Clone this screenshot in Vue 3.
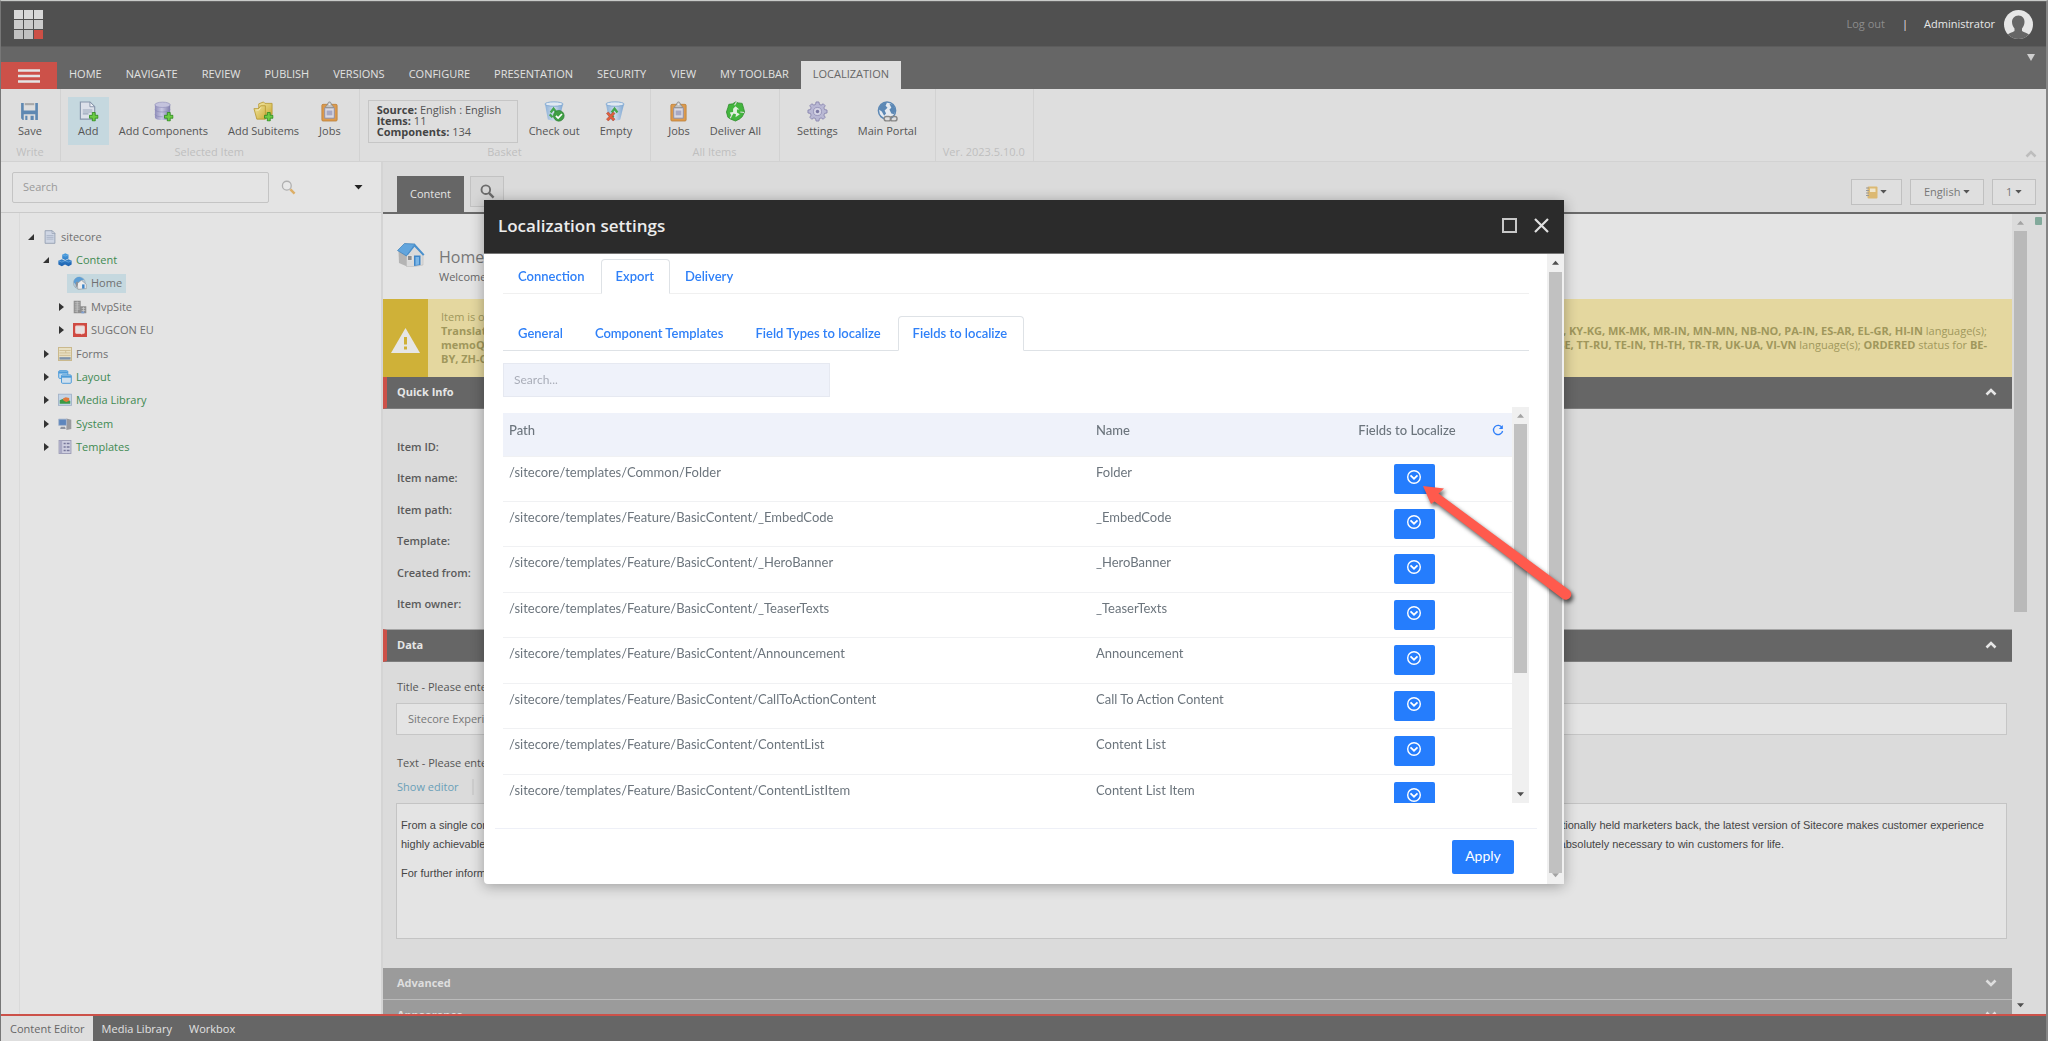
<script setup>
import { ref } from 'vue'

const ribbonTabs = ['Home', 'Navigate', 'Review', 'Publish', 'Versions', 'Configure', 'Presentation', 'Security', 'View', 'My Toolbar', 'Localization']
const activeTab = ref('Localization')

const tree = [
  { label: 'sitecore', level: 0, icon: 'doc', state: 'open' },
  { label: 'Content', level: 1, icon: 'cubes', state: 'open', green: true },
  { label: 'Home', level: 2, icon: 'globeHouse', state: 'leaf', selected: true },
  { label: 'MvpSite', level: 2, icon: 'buildings', state: 'closed' },
  { label: 'SUGCON EU', level: 2, icon: 'board', state: 'closed' },
  { label: 'Forms', level: 1, icon: 'forms', state: 'closed' },
  { label: 'Layout', level: 1, icon: 'windows', state: 'closed', green: true },
  { label: 'Media Library', level: 1, icon: 'picture', state: 'closed', green: true },
  { label: 'System', level: 1, icon: 'computer', state: 'closed', green: true },
  { label: 'Templates', level: 1, icon: 'template', state: 'closed', green: true },
]

const itemFields = ['Item ID:', 'Item name:', 'Item path:', 'Template:', 'Created from:', 'Item owner:']

const base = '/sitecore/templates/Feature/BasicContent/'
const rows = [
  { path: '/sitecore/templates/Common/Folder', name: 'Folder' },
  { path: base + '_EmbedCode', name: '_EmbedCode' },
  { path: base + '_HeroBanner', name: '_HeroBanner' },
  { path: base + '_TeaserTexts', name: '_TeaserTexts' },
  { path: base + 'Announcement', name: 'Announcement' },
  { path: base + 'CallToActionContent', name: 'Call To Action Content' },
  { path: base + 'ContentList', name: 'Content List' },
  { path: base + 'ContentListItem', name: 'Content List Item' },
]

const settingsTabs = ['Connection', 'Export', 'Delivery']
const exportTabs = ['General', 'Component Templates', 'Field Types to localize', 'Fields to localize']
const settingsTab = ref('Export')
const exportTab = ref('Fields to localize')
const treeSearch = ref('')
const fieldSearch = ref('')
const itemTitle = ref('Sitecore Experience Platform')
</script>

<template>
  <div class="app">
    <svg class="sprite" aria-hidden="true">
      <defs>
        <linearGradient id="gBlue" x1="0" y1="0" x2="0" y2="1"><stop offset="0" stop-color="#4a9fe0" /><stop offset="1" stop-color="#1b5fae" /></linearGradient>
        <linearGradient id="gGold" x1="0" y1="0" x2="1" y2="1"><stop offset="0" stop-color="#f1e6a0" /><stop offset="1" stop-color="#cdae3c" /></linearGradient>
        <linearGradient id="gLilac" x1="0" y1="0" x2="1" y2="0"><stop offset="0" stop-color="#8f8dba" /><stop offset=".45" stop-color="#c9c8e2" /><stop offset="1" stop-color="#807eac" /></linearGradient>
        <linearGradient id="gBin" x1="0" y1="0" x2="1" y2="0"><stop offset="0" stop-color="#8ab0d8" /><stop offset=".5" stop-color="#cfdcea" /><stop offset="1" stop-color="#7ba5d2" /></linearGradient>
      </defs>
      <symbol id="plus" viewBox="0 0 10 10"><path d="M3.500 .5h3v3h3v3h-3v3h-3v-3h-3v-3h3z" fill="#6ccb45" stroke="#2f8a22" stroke-width=".9" /></symbol>
      <symbol id="save" viewBox="0 0 20 20"><path d="M2 2h2.500v7h11V2H18v16h-2.500v-5.500h-11V18H3.500L2 16.500z" fill="#5e88b2" /><path d="M5.500 2h9v2h-9z" fill="#a9a9a9" /><path d="M6 14h2v4H6zM11 14h3v4h-3z" fill="#5e88b2" /></symbol>
      <symbol id="doc" viewBox="0 0 20 20"><path d="M3 1h10l4 4v14H3z" fill="#cfd6e4" stroke="#8e9aae" stroke-width="1.200" /><path d="M13 1v4h4z" fill="#f0f2f6" stroke="#8e9aae" stroke-width="1" /><path d="M5 8h10M5 10.500h10M5 13h10" stroke="#a3adc0" stroke-width="1.100" /></symbol>
      <symbol id="docAdd" viewBox="0 0 22 22"><path d="M2.500 1h10l5 5v13h-15z" fill="#dde1ea" stroke="#8795ab" stroke-width="1.200" /><path d="M12.500 1v5h5z" fill="#f0f2f6" stroke="#8795ab" stroke-width="1" /><path d="M5 9.500h10M5 11.500h10M5 13.500h6" stroke="#9ba7bb" stroke-width="1.100" /><use href="#plus" x="11.500" y="11.500" width="10" height="10" /></symbol>
      <symbol id="dbAdd" viewBox="0 0 22 22"><path d="M2 4v13c0 2 3.500 3 8 3s8-1 8-3V4z" fill="url(#gLilac)" /><ellipse cx="10" cy="4" rx="8" ry="2.800" fill="#c4c3dd" stroke="#9290bb" stroke-width=".7" /><path d="M2 9c1 2 4 2.500 8 2.500S17 11 18 9M2 14c1 2 4 2.500 8 2.500" fill="none" stroke="#8785b4" stroke-width=".6" /><use href="#plus" x="11.500" y="11.500" width="10" height="10" /></symbol>
      <symbol id="folderAdd" viewBox="0 0 22 22"><path d="M6 3l5-2 1.500 1.500H20V14H6z" fill="url(#gGold)" stroke="#b99a35" stroke-width=".9" /><path d="M1 8h5l2-3h5v14H4z" fill="url(#gGold)" stroke="#b99a35" stroke-width=".9" /><path d="M3.500 9.500H6L8 7" fill="none" stroke="#f7f0c8" stroke-width="1" /><use href="#plus" x="11.500" y="11.500" width="10" height="10" /></symbol>
      <symbol id="clip" viewBox="0 0 22 22"><rect x="3" y="3.500" width="16" height="17.500" rx="1.200" fill="#dc9a4c" stroke="#b97e3a" stroke-width=".8" /><path d="M6 7h10v11H6z" fill="#d9d9e3" stroke="#8d8fa8" stroke-width="1" /><path d="M8 10h6v5H8z" fill="#a7a8c4" /><path d="M7 7c0-2 1-2.500 2-3 0-2 1-3 2-3s2 1 2 3c1 .500 2 1 2 3z" fill="#c4c4c4" stroke="#8a8a8a" stroke-width=".9" /><circle cx="11" cy="3.500" r="1" fill="#eee" /></symbol>
      <symbol id="bin" viewBox="0 0 22 22"><path d="M1 3l3 16.500c4 1.500 9 1.500 12 0L20 3z" fill="url(#gBin)" /><ellipse cx="10.500" cy="3.200" rx="9.500" ry="2.300" fill="#e1e9f2" stroke="#7ca5d0" stroke-width=".9" /><path d="M7 12l3-4 3 4M6 14l3 3" fill="none" stroke="#43a64c" stroke-width="2.400" /></symbol>
      <symbol id="binCheck" viewBox="0 0 22 22"><use href="#bin" width="22" height="22" /><circle cx="15.500" cy="15.500" r="5.600" fill="#3f9f43" stroke="#2a7b30" stroke-width=".7" /><path d="M12.500 15.500l2.300 2.400 4-4.300" fill="none" stroke="#fff" stroke-width="1.800" /></symbol>
      <symbol id="binX" viewBox="0 0 22 22"><use href="#bin" width="22" height="22" /><path d="M1.500 13l2-1.500 2.500 2.800 2.500-2.800 2 1.500-2.800 3.200L10.500 19l-2 2L6 18l-2.500 3-2-2 2.800-2.800z" fill="#e0603f" stroke="#a93c26" stroke-width=".5" /></symbol>
      <symbol id="recycle" viewBox="0 0 22 22"><path d="M11 1l3 1 4 .500 1.500 5 1 4-2.500 5-3 2.500-4 2-5-2-3-2-1.500-5.500L3 7l1-3.500 4-.500z" fill="#43b53e" stroke="#2d8a2a" stroke-width=".8" /><path d="M11 5.500l4 3.500h-2.500v3l3 2-4.500 3 .500-3-2.500-1-2 3-2-4 3.500-.500V8z" fill="#e2efe0" /><path d="M12 1l-2 3.500M20 12l-4-.5M5.500 18L7 15" stroke="#dcdcdc" stroke-width="1.200" /></symbol>
      <symbol id="gear" viewBox="0 0 22 22"><path d="M9.500 1h3l.5 2.600 1.800.7L17 2.900 19.100 5l-1.400 2.200.7 1.800 2.600.5v3l-2.600.5-.7 1.800 1.400 2.200-2.100 2.100-2.200-1.400-1.800.7-.5 2.600h-3L9 18.400l-1.800-.7L5 19.100 2.900 17l1.400-2.200-.7-1.800L1 12.500v-3L3.600 9l.7-1.800L2.900 5 5 2.900l2.200 1.400L9 3.600z" fill="#b9b8d4" stroke="#8683ad" stroke-width=".9" /><circle cx="11" cy="11" r="4.200" fill="#d4d3e4" stroke="#8683ad" stroke-width=".7" /><circle cx="11" cy="11" r="1.800" fill="#7a77a2" /></symbol>
      <symbol id="globe" viewBox="0 0 22 22"><circle cx="10.500" cy="10" r="9" fill="#e5eaf0" stroke="#5c88b5" stroke-width="1.600" /><path d="M2.500 6C4 3 7 1.500 10.500 1.500L9 5l2 2-3 3 1.500 3-2 2.500L5 11 2 9zM13 3l4 1 2.500 5-1.500 5-3-1-2-4 2-2z" fill="#5c88b5" /><rect x="7.500" y="16.200" width="7" height="4.600" rx="2.300" fill="#dedede" stroke="#888" stroke-width="1.500" /><rect x="14" y="16.200" width="7" height="4.600" rx="2.300" fill="none" stroke="#888" stroke-width="1.500" /></symbol>
      <symbol id="glass" viewBox="0 0 16 16"><circle cx="6.200" cy="6" r="4.600" fill="none" stroke="currentColor" stroke-width="2" /><path d="M9.500 9.500l5 5" stroke="currentColor" stroke-width="2.600" /></symbol>
      <symbol id="glassGold" viewBox="0 0 16 16"><circle cx="6.200" cy="6" r="4.700" fill="#e8e8e8" stroke="#b0b0b0" stroke-width="1.400" /><path d="M10 10l4.500 4.500" stroke="#dcae66" stroke-width="2.600" /></symbol>
      <symbol id="cubes" viewBox="0 0 20 20"><path d="M6 2.500L10.500.500 15 2.500v5.500L10.500 10 6 8zM.5 11L5.500 9l4.500 2v5.500L5.500 19l-5-2.500zM10 11l5-2 4.500 2v5.500L15 19l-5-2.500z" fill="url(#gBlue)" /><path d="M6 2.500l4.500 1.800L15 2.500M.5 11l5 2 4.500-2M10 11l5 2 4.500-2" fill="none" stroke="#7fb8e8" stroke-width=".8" /></symbol>
      <symbol id="house" viewBox="0 0 28 24"><path d="M1.500 8L10 12v11.500L2 20z" fill="#b4b4b4" /><path d="M9.500 12.500L17.500 3 26 12v10l-8 1.500H9.500z" fill="#dadada" stroke="#b5b5b5" stroke-width=".5" /><path d="M.5 7.500L7.500 .500 18 1l-8.500 12z" fill="#62a5dd" stroke="#3c7fb9" stroke-width=".7" /><path d="M18 1l9.500 10.500-1.500 1.200-8.500-9-7.500 9.500-.7-.7z" fill="#4a90cd" /><path d="M17 12.500h6.500V22l-6.500 1z" fill="#3f86c8" /><path d="M18.500 14h3.500v7.500l-3.500.5z" fill="#7cb6e6" /><path d="M10.500 12.500h4.500v5h-4.500z" fill="#8e8e8e" stroke="#efefef" stroke-width=".7" /></symbol>
      <symbol id="globeHouse" viewBox="0 0 20 20"><circle cx="9" cy="10" r="8.500" fill="#b9cbd8" stroke="#8ea3b2" stroke-width=".8" /><path d="M1 9C2 3 6 1 10 1.500l6 3-6 3-6 5z" fill="#5c9ed6" /><path d="M6 11l6-5 7 6v6l-12 1z" fill="#ededed" stroke="#8e8e8e" stroke-width=".8" /><path d="M13 12h3.500v6H13z" fill="#3f86c8" /><path d="M4 9l3-1v5l-3 4z" fill="#8e9196" /></symbol>
      <symbol id="buildings" viewBox="0 0 20 20"><path d="M1 1h10v18H1zM11 9h8v10h-8z" fill="#8f8f8f" /><path d="M2.500 4h7M2.500 7h7M2.500 10h7M2.500 13h7M2.500 16h4M12.500 12h5M12.500 15h5M6 2v16M15 10v8" stroke="#cfcfcf" stroke-width="1" /><path d="M12 16.500h4V19h-4z" fill="#7ea0d6" /></symbol>
      <symbol id="board" viewBox="0 0 20 20"><path d="M0 0h20v20H0z" fill="#cf4a42" /><rect x="4" y="4.500" width="12" height="10" rx="1" fill="#e6e0e0" stroke="#f0dedc" stroke-width="1.600" /><path d="M10 14l3 3v-3z" fill="#f0dedc" /></symbol>
      <symbol id="forms" viewBox="0 0 20 20"><rect x=".7" y=".7" width="18.600" height="18.600" fill="#e8e0c4" stroke="#c9b88c" stroke-width="1.400" /><path d="M2 5h16M2 8.500h16M2 12h16M11 5v3.500" stroke="#cdbd92" stroke-width="1.300" /><path d="M2 14.500h16V18H2z" fill="#7f93ab" /></symbol>
      <symbol id="windows" viewBox="0 0 20 20"><rect x="1" y="1" width="13" height="11" rx="1.500" fill="#bcd9f0" stroke="#4c9bd9" stroke-width="1.400" /><path d="M1 2h13v3H1z" fill="#4c9bd9" /><rect x="5" y="7" width="14" height="12" rx="1.500" fill="#cfe0ee" stroke="#4c9bd9" stroke-width="1.400" /><path d="M5 8h14v3H5z" fill="#4c9bd9" /></symbol>
      <symbol id="picture" viewBox="0 0 20 20"><rect x=".7" y="1.700" width="18.600" height="16" fill="#c3d4e6" stroke="#9fb0c6" stroke-width="1.200" /><path d="M2.500 15.500v-5l4-2 5 3 3-2 3 2v4z" fill="#3b9a45" /><path d="M7 8l4-2 5 1v4l-4 2-4-2z" fill="#e07a3c" /></symbol>
      <symbol id="computer" viewBox="0 0 20 20"><path d="M12 2l7 2v13l-7 1.500z" fill="#9a9a9e" /><path d="M1 3h11v9H1z" fill="#5d86bd" stroke="#aab8cc" stroke-width="1.200" /><path d="M4 14h6l1 3H3z" fill="#8d93a0" /></symbol>
      <symbol id="template" viewBox="0 0 20 20"><rect x="1.500" y=".7" width="17" height="18.600" fill="#cfcfe0" stroke="#9a9ab4" stroke-width="1.300" /><path d="M2 1h4v18H2z" fill="#a9a9c4" /><path d="M8 5h3M8 10h3M8 15h3M12.500 5h4M12.500 10h4M12.500 15h4" stroke="#77779a" stroke-width="1.800" /></symbol>
      <symbol id="chevUp" viewBox="0 0 12 8"><path d="M1.500 6.500L6 2l4.500 4.500" fill="none" stroke="currentColor" stroke-width="2.600" /></symbol>
      <symbol id="triUp" viewBox="0 0 8 5"><path d="M0 5l4-4.500L8 5z" fill="currentColor" /></symbol>
      <symbol id="triDown" viewBox="0 0 8 5"><path d="M0 0h8L4 4.500z" fill="currentColor" /></symbol>
      <symbol id="circleDown" viewBox="0 0 16 16"><circle cx="8" cy="8" r="6.300" fill="none" stroke="currentColor" stroke-width="1.400" /><path d="M4.500 6.300L8 9.700l3.500-3.400" fill="none" stroke="currentColor" stroke-width="1.800" /></symbol>
    </svg>

    <header class="topbar">
      <svg class="logo" viewBox="0 0 29 29" aria-label="Sitecore">
        <path d="M0 0h9v9H0zM10 0h9v9h-9zM20 0h9v9h-9z" fill="#d9d9d9" />
        <path d="M0 10h9v9H0zM10 10h9v9h-9zM20 10h9v9h-9z" fill="#cbcbcb" />
        <path d="M0 20h9v9H0zM10 20h9v9h-9z" fill="#c0c0c0" /><path d="M20 20h9v9h-9z" fill="#cc4f45" />
      </svg>
      <div class="account">
        <a href="#" class="logout">Log out</a>
        <span class="bar">|</span>
        <span class="user">Administrator</span>
        <svg class="avatar" viewBox="0 0 29 29"><clipPath id="av"><circle cx="14.500" cy="14.500" r="14.500" /></clipPath><g clip-path="url(#av)"><path d="M0 0h29v29H0z" fill="#e6e6e6" /><path d="M14.500 5.500c4 0 6 3 6 6.500 0 3-1.300 5-2.500 6.500v2.500c2 1.500 5.500 2 7.500 4L20 30H8l-5-5c2-2 5.500-2.500 7.500-4v-2.500C9.300 17 8 15 8 12c0-3.500 2.500-6.500 6.500-6.500z" fill="#666" /></g></svg>
      </div>
    </header>

    <nav class="ribbon-tabs">
      <button class="burger" aria-label="Menu"><svg viewBox="0 0 22 14" width="22" height="14"><path d="M0 1.500h22M0 7h22M0 12.500h22" stroke="#e4e4e4" stroke-width="2.600" /></svg></button>
      <button v-for="t in ribbonTabs" :key="t" class="rtab" :class="{ active: t === activeTab }" @click="activeTab = t">{{ t }}</button>
      <svg class="menu-tri" viewBox="0 0 8 5" preserveAspectRatio="none"><path d="M0 0h8L4 5z" fill="#cfcfcf" /></svg>
    </nav>

    <section class="ribbon">
      <div class="group">
        <div class="tools"><button class="tool"><svg><use href="#save" /></svg>Save</button></div>
        <div class="caption">Write</div>
      </div>
      <div class="group">
        <div class="tools">
          <button class="tool on"><svg><use href="#docAdd" /></svg>Add</button>
          <button class="tool"><svg><use href="#dbAdd" /></svg>Add Components</button>
          <button class="tool"><svg><use href="#folderAdd" /></svg>Add Subitems</button>
          <button class="tool"><svg><use href="#clip" /></svg>Jobs</button>
        </div>
        <div class="caption">Selected Item</div>
      </div>
      <div class="group">
        <div class="tools">
          <div class="basket"><b>Source:</b> English : English<br /><b>Items:</b> 11<br /><b>Components:</b> 134</div>
          <button class="tool"><svg><use href="#binCheck" /></svg>Check out</button>
          <button class="tool"><svg><use href="#binX" /></svg>Empty</button>
        </div>
        <div class="caption">Basket</div>
      </div>
      <div class="group">
        <div class="tools">
          <button class="tool"><svg><use href="#clip" /></svg>Jobs</button>
          <button class="tool"><svg><use href="#recycle" /></svg>Deliver All</button>
        </div>
        <div class="caption">All Items</div>
      </div>
      <div class="group">
        <div class="tools">
          <button class="tool"><svg><use href="#gear" /></svg>Settings</button>
          <button class="tool"><svg><use href="#globe" /></svg>Main Portal</button>
        </div>
        <div class="caption"></div>
      </div>
      <div class="group">
        <div class="tools"></div>
        <div class="caption">Ver. 2023.5.10.0</div>
      </div>
      <svg class="collapse"><use href="#chevUp" /></svg>
    </section>

    <main class="workspace">
      <aside class="side">
        <div class="side-search">
          <input v-model="treeSearch" type="text" placeholder="Search" aria-label="Search tree" />
          <svg class="mag"><use href="#glassGold" /></svg>
          <svg class="drop"><use href="#triDown" /></svg>
        </div>
        <div class="tree-wrap">
          <ul class="tree">
            <li v-for="n in tree" :key="n.label" :class="['lv' + n.level]">
              <span class="twist" :class="n.state"></span>
              <a href="#" class="node" :class="{ selected: n.selected, green: n.green }">
                <svg><use :href="'#' + n.icon" /></svg>{{ n.label }}
              </a>
            </li>
          </ul>
        </div>
      </aside>

      <section class="editor">
        <div class="editor-tabs">
          <button class="etab">Content</button>
          <button class="esearch" aria-label="Search"><svg><use href="#glass" /></svg></button>
          <div class="pickers">
            <button class="pick book" aria-label="Bookmarks">
              <svg class="bk" viewBox="0 0 12 13"><rect x="1.500" y=".5" width="10" height="12" rx="1" fill="#dcb972" /><path d="M4 2.500h5.500v3.500H4z" fill="#f0e6cc" /><path d="M0 2h3M0 4.500h3M0 7h3M0 9.500h3" stroke="#9a9a9a" stroke-width="1" /></svg>
              <svg class="tri"><use href="#triDown" /></svg>
            </button>
            <span class="pick"><select aria-label="Language"><option>English</option></select><svg class="tri"><use href="#triDown" /></svg></span>
            <span class="pick"><select aria-label="Version"><option>1</option></select><svg class="tri"><use href="#triDown" /></svg></span>
          </div>
        </div>

        <div class="editor-body">
          <div class="sheet">
            <div class="item-head">
              <svg class="home-icon"><use href="#house" /></svg>
              <div><h1>Home</h1><p>Welcome</p></div>
            </div>
            <div class="warn">
              <div class="warn-icon"><svg viewBox="0 0 29 25"><path d="M14.500 0L29 25H0z" fill="#e6e6e6" /><path d="M14.500 9v7.500M14.500 18.500v3" stroke="#cfb138" stroke-width="3" /></svg></div>
              <div class="warn-text">
                <div><span>Item is ordered</span></div>
                <div><b>Translation</b><span><b>SW-KE, KY-KG, MK-MK, MR-IN, MN-MN, NB-NO, PA-IN, ES-AR, EL-GR, HI-IN</b> language(s);</span></div>
                <div><b>memoQ</b><span><b>SV-SE, TT-RU, TE-IN, TH-TH, TR-TR, UK-UA, VI-VN</b> language(s); <b>ORDERED</b> status for <b>BE-</b></span></div>
                <div><b>BY, ZH-CN</b></div>
              </div>
            </div>
            <button class="section-bar">Quick Info<svg><use href="#chevUp" /></svg></button>
            <dl class="info"><dt v-for="f in itemFields" :key="f">{{ f }}</dt></dl>
            <button class="section-bar edge">Data<svg><use href="#chevUp" /></svg></button>
            <div class="fields">
              <label for="title">Title - Please enter a title</label>
              <input id="title" v-model="itemTitle" type="text" />
              <div class="flabel">Text - Please enter a text</div>
              <div class="links"><a href="#">Show editor</a></div>
              <div class="rich">
                <div class="line"><span>From a single connected platform</span><span>complexity that has traditionally held marketers back, the latest version of Sitecore makes customer experience</span></div>
                <div class="line last"><span>highly achievable.</span><span>the technology foundation absolutely necessary to win customers for life.</span></div>
                <p>For further information</p>
              </div>
            </div>
            <button class="section-bar closed">Advanced<svg class="down"><use href="#chevUp" /></svg></button>
            <button class="section-bar closed">Appearance<svg class="down"><use href="#chevUp" /></svg></button>
          </div>
          <div class="scroll outer">
            <svg class="dim"><use href="#triUp" /></svg><i></i><svg><use href="#triDown" /></svg>
          </div>
          <div class="gutter"><i></i></div>
        </div>
      </section>
    </main>

    <footer class="taskbar">
      <button class="on">Content Editor</button>
      <button>Media Library</button>
      <button>Workbox</button>
    </footer>

    <div class="overlay">
      <div class="dialog" role="dialog" aria-labelledby="dlg">
        <div class="dlg-head">
          <h2 id="dlg">Localization settings</h2>
          <button aria-label="Maximize"><svg viewBox="0 0 15 15"><path d="M1 1h13v13H1z" fill="none" stroke="#c8c8c8" stroke-width="2" /></svg></button>
          <button aria-label="Close"><svg viewBox="0 0 15 15"><path d="M1 1l13 13M14 1L1 14" stroke="#e0e0e0" stroke-width="2.200" /></svg></button>
        </div>
        <div class="dlg-main">
          <div class="dlg-body">
            <div class="dlg-content">
              <nav class="tabs first"><a v-for="t in settingsTabs" :key="t" href="#" :class="{ on: t === settingsTab }" @click.prevent="settingsTab = t">{{ t }}</a></nav>
              <nav class="tabs second"><a v-for="t in exportTabs" :key="t" href="#" :class="{ on: t === exportTab }" @click.prevent="exportTab = t">{{ t }}</a></nav>
              <input v-model="fieldSearch" class="find" type="text" placeholder="Search..." aria-label="Search fields" />
              <div class="grid">
                <div class="table-clip">
                  <table>
                    <thead>
                      <tr><th class="c-path">Path</th><th class="c-name">Name</th><th class="c-act">Fields to Localize</th><th class="c-ref"><button aria-label="Refresh"><svg viewBox="0 0 12 12"><path d="M10 3.600A4.600 4.600 0 1 0 10.600 7" fill="none" stroke="#2f7ff8" stroke-width="1.300" /><path d="M10.800 1v4h-4z" fill="#2f7ff8" /></svg></button></th></tr>
                    </thead>
                    <tbody>
                      <tr v-for="r in rows" :key="r.path">
                        <td>{{ r.path }}</td><td>{{ r.name }}</td>
                        <td class="c-act"><button :aria-label="'Fields of ' + r.name"><svg><use href="#circleDown" /></svg></button></td><td></td>
                      </tr>
                    </tbody>
                  </table>
                </div>
                <div class="scroll inner"><svg class="dim"><use href="#triUp" /></svg><i></i><svg><use href="#triDown" /></svg></div>
              </div>
            </div>
            <div class="dlg-foot"><button>Apply</button></div>
          </div>
          <div class="scroll modal"><svg><use href="#triUp" /></svg><i></i><svg class="dim"><use href="#triDown" /></svg></div>
        </div>
        <svg class="pointer" viewBox="0 0 156 122"><path d="M3 4L24 6.500 18.500 11.500 148.500 107.500A5.300 5.300 0 0 1 143 117L14.500 19.500 11 22z" fill="#ff5a4d" /></svg>
      </div>
    </div>
  </div>
</template>

<style>
html, body { height: 100%; }
body { overflow: hidden; }
</style>

<style scoped>
* { box-sizing: border-box; }
button, input, select { font: inherit; color: inherit; border: 0; padding: 0; margin: 0; background: none; outline: none; border-radius: 0; }
h1, h2, p, ul, dl, dt { margin: 0; padding: 0; font-weight: 400; }
a { text-decoration: none; color: inherit; }
svg { display: block; flex: none; }
.sprite { position: absolute; width: 0; height: 0; }
.app { display: flex; flex-direction: column; height: 100vh; font: 11px/16px "Open Sans", sans-serif; color: #555; background: #dbdbdb; border-left: 1px solid #777; border-right: 2px solid #858585; border-top: 1px solid #c9cbc9; }

.topbar { display: flex; justify-content: space-between; align-items: center; height: 45px; padding: 0 13px; background: #505050; border-top: 1px solid #666; }
.logo { width: 29px; height: 29px; }
.account { display: flex; align-items: center; color: #e8e8e8; }
.logout { color: #8c8c8c; }
.bar { margin: 0 16px 0 17px; }
.user { margin-right: 9px; font-weight: 500; }
.avatar { width: 29px; height: 29px; }

.ribbon-tabs { display: flex; align-items: flex-end; height: 43px; padding-right: 11px; background: #666; border-top: 1px solid #5c5c5c; }
.burger { width: 56px; height: 27px; background: #cc5149; display: flex; align-items: center; justify-content: center; }
.rtab { height: 28px; padding: 0 12px 2px; color: #e2e2e2; text-transform: uppercase; }
.rtab.active { background: #dedede; color: #666; }
.menu-tri { width: 8px; height: 7px; margin: 0 0 28px auto; color: #cfcfcf; }

.ribbon { display: flex; height: 73px; background: #dedede; border-bottom: 1px solid #d2d2d2; padding-right: 9px; }
.group { display: flex; flex-direction: column; padding: 8px 8px 0 7px; border-right: 1px solid #d2d2d2; }
.tools { display: flex; height: 48px; }
.tool { display: flex; flex-direction: column; align-items: center; padding: 4px 10px 0; white-space: nowrap; }
.tool svg { width: 21px; height: 21px; margin-bottom: 1px; }
.tool.on { background: #c5d8df; }
.caption { margin-top: -1px; text-align: center; color: #bfbfbf; }
.basket { width: 150px; height: 43px; margin: 3px 1px 0; padding: 3px 8px 0; border: 1px solid #c6c6c6; line-height: 11px; }
.basket b { color: #444; }
.collapse { width: 12px; height: 8px; margin: auto 0 3px auto; color: #bdbdbd; }

.workspace { display: flex; flex: 1; min-height: 0; }
.side { display: flex; flex-direction: column; width: 382px; flex: none; background: #e4e4e4; border-right: 2px solid #d4d4d4; }
.side-search { display: flex; align-items: center; height: 51px; padding: 0 18px 0 11px; border-bottom: 1px solid #cacaca; }
.side-search input { width: 257px; height: 31px; padding: 0 10px 2px; border: 1px solid #c4c4c4; border-radius: 2px; }
.side-search input::placeholder { color: #9a9a9a; }
.mag { width: 15px; height: 15px; margin-left: 12px; }
.drop { width: 9px; height: 5px; margin-left: auto; color: #222; }
.tree-wrap { flex: 1; margin-left: 18px; padding-top: 12px; border-left: 1px solid #dadada; }
.tree { display: grid; grid-auto-rows: 1fr; height: 234px; list-style: none; }
.tree li { display: flex; align-items: center; padding-left: 6px; }
.tree .lv1 { padding-left: 21px; }
.tree .lv2 { padding-left: 36px; }
.twist { width: 10px; display: flex; justify-content: center; margin-right: 1px; }
.twist.open::before { content: ""; border-left: 6px solid transparent; border-bottom: 6px solid #333; }
.twist.closed::before { content: ""; border-left: 5px solid #333; border-top: 4px solid transparent; border-bottom: 4px solid transparent; }
.node { display: flex; align-items: center; height: 19px; padding: 0 4px 0 6px; gap: 4px; color: #707070; }
.node svg { width: 14px; height: 14px; }
.node.green { color: #3f8a52; }
.node.selected { background: #c5d8df; }

.editor { flex: 1; display: flex; flex-direction: column; min-width: 0; }
.editor-tabs { display: flex; height: 52px; padding: 14px 10px 0 14px; border-bottom: 2px solid #6a6a6a; align-items: flex-start; }
.etab { width: 67px; height: 37px; padding-bottom: 2px; background: #666; color: #e4e4e4; }
.esearch { width: 34px; height: 31px; margin-left: 6px; border: 1px solid #c2c2c2; background: #d6d6d6; color: #6c6c6c; display: flex; align-items: center; justify-content: center; }
.esearch svg { width: 15px; height: 15px; }
.pickers { display: flex; gap: 8px; margin: 3px 0 0 auto; }
.pick { display: flex; align-items: center; gap: 2px; height: 26px; padding: 0 13px; border: 1px solid #c0c0c0; background: #dfdfdf; color: #777; }
.pick.book { padding: 0 14px; }
.pick select { appearance: none; }
.bk { width: 12px; height: 13px; }
.tri { width: 7px; height: 4px; color: #555; }

.editor-body { flex: 1; min-height: 0; display: flex; }
.sheet { flex: 1; min-width: 0; overflow: hidden; }
.item-head { display: flex; height: 85px; padding: 29px 14px 0; gap: 14px; background: #e4e4e4; }
.home-icon { width: 28px; height: 24px; }
.item-head h1 { font-size: 16px; line-height: 28px; color: #777; }
.item-head p { line-height: 12px; color: #666; }
.warn { display: flex; height: 78px; background: #e4d79f; }
.warn-icon { width: 45px; background: #cfb138; display: flex; align-items: center; justify-content: center; }
.warn-icon svg { width: 29px; height: 25px; margin-top: 4px; }
.warn-text { flex: 1; padding: 11px 25px 0 13px; line-height: 14px; color: #a0975c; display: grid; align-content: start; }
.warn-text div { display: flex; justify-content: space-between; }
.section-bar { display: flex; width: 100%; height: 32px; align-items: center; justify-content: space-between; padding: 0 15px 2px 10px; background: #666; border-left: 4px solid #cc5149; border-bottom: 1px solid #7d7d7d; color: #e6e6e6; font-weight: 700; }
.section-bar.edge { height: 33px; border-top: 1px solid #a5a5a5; }
.section-bar svg { width: 12px; height: 8px; }
.section-bar.closed { background: #9b9b9b; border-left: 0; padding-left: 14px; border-bottom-color: #bbb; color: #dedede; }
.down { transform: rotate(180deg); }
.info { display: grid; grid-auto-rows: 1fr; height: 189px; margin: 22px 14px 9px; align-items: center; }
.info dt { font-weight: 600; color: #5a5a5a; }
.fields { padding: 17px 5px 29px 13px; }
.fields label, .flabel { display: block; padding-left: 1px; margin-bottom: 8px; color: #555; }
.fields input { display: block; width: 100%; height: 32px; padding: 0 11px 2px; border: 1px solid #c6c6c6; background: #e4e4e4; color: #777; }
.flabel { margin: 20px 0 8px; }
.links { display: flex; padding-left: 1px; color: #6a9fb8; }
.links a { padding-right: 13px; border-right: 2px solid #cecece; }
.rich { height: 136px; margin-top: 8px; padding: 12px 22px 12px 4px; border: 1px solid #c4c4c4; background: #e4e4e4; font: 11px/19px "Liberation Sans", Arial, sans-serif; color: #444; }
.line { display: flex; justify-content: space-between; }
.line.last { padding-right: 200px; }
.rich p { margin-top: 10px; }

.scroll { display: flex; flex-direction: column; align-items: center; flex: none; width: 17px; background: #f0f0f0; color: #505050; }
.scroll svg { width: 7px; height: 5px; margin: 6px 0; }
.scroll .dim { color: #a3a3a3; }
.scroll i { width: 13px; background: #c1c1c1; }
.scroll svg:last-child { margin-top: auto; }
.outer { background: #dbdbdb; }
.outer i { height: 381px; background: #b9b9b9; }
.gutter { width: 17px; padding: 3px 0 0 6px; }
.gutter i { display: block; width: 7px; height: 8px; background: #82a99b; border-radius: 1px; }

.taskbar { display: flex; height: 27px; background: #666; border-top: 2px solid #cc5149; color: #e2e2e2; }
.taskbar button { padding: 0 8px 0 9px; }
.taskbar .on { background: #dedede; color: #666; }

.overlay { position: fixed; inset: 0; display: flex; justify-content: center; align-items: flex-start; padding-top: 200px; }
.dialog { position: relative; width: 1080px; max-width: 100%; background: #fff; border-radius: 0 0 4px 4px; box-shadow: 0 2px 14px rgba(0, 0, 0, .32); font-family: Lato, sans-serif; font-size: 13px; color: #6c757d; }
.dlg-head { display: flex; align-items: center; height: 54px; padding: 0 15px 2px 14px; gap: 17px; background: #2b2b2b; border-bottom: 1px solid #777; }
.dlg-head h2 { margin-right: auto; font: 600 17px/24px "Open Sans", sans-serif; color: #ececec; }
.dlg-head svg { width: 15px; height: 15px; }
.dlg-main { display: flex; }
.dlg-body { flex: 1; min-width: 0; padding: 5px 10px 10px 11px; }
.dlg-content { padding: 0 8px 25px; border-bottom: 1px solid #eef0f7; }
.tabs { display: flex; height: 35px; border-bottom: 1px solid #dee2e6; }
.tabs a { height: 35px; padding: 7px 15px 0 14px; line-height: 18px; color: #2f80f8; font-weight: 600; border: 1px solid transparent; }
.tabs a.on { background: #fff; border-color: #dee2e6 #dee2e6 #fff; border-radius: 4px 4px 0 0; }
.tabs.first { border-bottom-color: #f0f0f0; }
.tabs.second { margin-top: 22px; }
.tabs.second a { padding-right: 16px; }
.find { display: block; width: 327px; height: 34px; margin: 12px 0 10px; padding: 0 10px 2px; background: #eff2fa; border: 1px solid #e6e9f1; font-size: 12px; }
.find::placeholder { color: #a9adb8; }
.grid { display: flex; height: 396px; overflow: hidden; }
.table-clip { flex: 1; padding-top: 6px; overflow: hidden; }
table { width: 100%; height: 406px; border-collapse: collapse; table-layout: fixed; }
thead tr { height: 43px; background: #eff2fa; }
th, td { padding: 8px 6px 0; text-align: left; vertical-align: top; font-weight: 400; line-height: 18px; }
td { padding-top: 6px; }
th { font-weight: 500; }
tbody tr { border-top: 1px solid #f0f1f3; }
.c-path { width: 587px; }
.c-name { width: 256px; }
.c-act { width: 122px; text-align: center; white-space: nowrap; padding-left: 0; padding-right: 0; }
.c-ref button { display: block; margin: 3px 0 0 18px; }
.c-ref svg { width: 12px; height: 12px; }
td.c-act { padding: 7px 0 0 14px; }
td button { width: 41px; height: 30px; padding-bottom: 4px; background: #257dfd; border-radius: 2px; color: #fff; display: flex; align-items: center; justify-content: center; margin: 0 auto; }
td svg { width: 16px; height: 16px; }
.inner i { height: 249px; }
.modal i { flex: 1; margin-top: 1px; }
.dlg-foot { display: flex; justify-content: flex-end; padding: 11px 23px 0 0; }
.dlg-foot button { width: 62px; height: 34px; padding-bottom: 2px; background: #257dfd; color: #fff; border-radius: 2px; font-size: 14px; }
.pointer { position: absolute; left: 936px; top: 282px; width: 156px; height: 122px; overflow: visible; filter: drop-shadow(2px 3px 2px rgba(0, 0, 0, .65)); }
</style>
